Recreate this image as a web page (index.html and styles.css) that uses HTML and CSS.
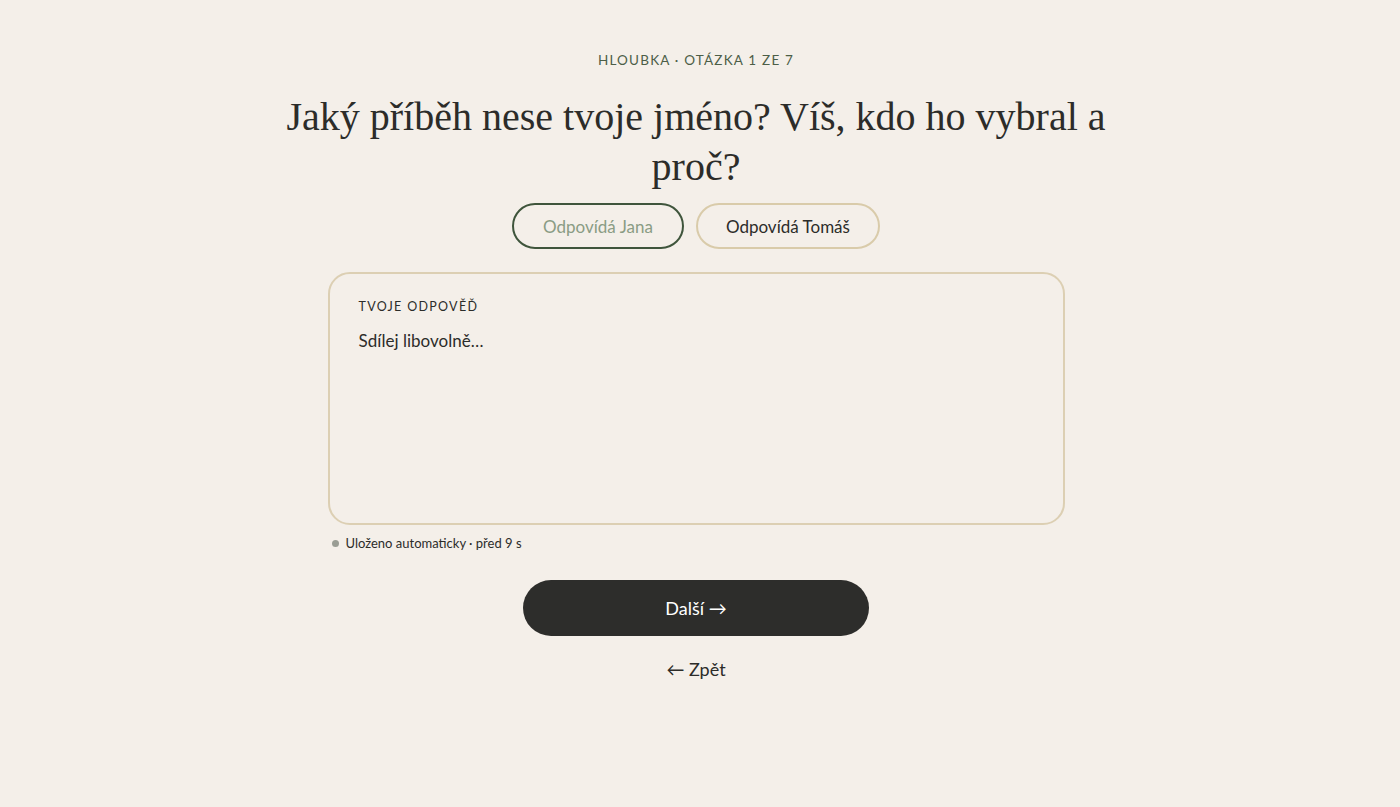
FILE: index.html
```html
<!DOCTYPE html>
<html lang="cs">
<head>
<meta charset="utf-8">
<title>Hloubka</title>
<link rel="stylesheet" href="styles.css">
</head>
<body>
<main class="page">
  <div class="kicker">Hloubka · Otázka 1 ze 7</div>
  <h1 class="question">Jaký příběh nese tvoje jméno? Víš, kdo ho vybral a proč?</h1>
  <div class="who">
    <button class="pill pill-active">Odpovídá Jana</button>
    <button class="pill">Odpovídá Tomáš</button>
  </div>
  <div class="card">
    <div class="card-label">Tvoje odpověď</div>
    <div class="card-placeholder">Sdílej libovolně…</div>
  </div>
  <div class="saved"><span class="dot"></span>Uloženo automaticky · před 9 s</div>
  <button class="next">Další →</button>
  <a class="back">← Zpět</a>
</main>
</body>
</html>
```

FILE: styles.css
```css
html, body {
  margin: 0;
  padding: 0;
  background: #f4efe9;
}
body {
  font-family: "Lato", "Open Sans", sans-serif;
  color: #2c2c29;
}
.page {
  display: flex;
  flex-direction: column;
  align-items: center;
  padding-top: 51px;
  padding-right: 8px;
}
.kicker {
  font-size: 13.5px;
  letter-spacing: 1.2px;
  text-transform: uppercase;
  color: #4c5e47;
  line-height: 18px;
}
.question {
  margin: 23px 0 0;
  max-width: 850px;
  text-align: center;
  font-family: "Liberation Serif", "DejaVu Serif", serif;
  font-weight: 400;
  font-size: 40px;
  line-height: 50px;
  color: #2c2c29;
}
.who {
  display: flex;
  gap: 12px;
  margin-top: 11px;
}
.pill {
  height: 46px;
  border-radius: 23px;
  background: transparent;
  border: 2px solid #d9cbaa;
  font-family: inherit;
  font-size: 17px;
  color: #2c2c29;
  padding: 0 28px;
  cursor: pointer;
}
.pill-active {
  border-color: #3f553c;
  color: #8a9c84;
  padding: 0 29px;
}
.card {
  box-sizing: border-box;
  width: 737px;
  height: 253px;
  margin-top: 23px;
  border: 2px solid #dccfb3;
  border-radius: 22px;
  padding: 24px 29px;
}
.card-label {
  font-size: 12.5px;
  letter-spacing: 1.3px;
  text-transform: uppercase;
  color: #2c2c29;
  line-height: 18px;
}
.card-placeholder {
  margin-top: 13px;
  font-size: 17px;
  line-height: 24px;
  color: #2c2c29;
}
.saved {
  align-self: center;
  width: 737px;
  box-sizing: border-box;
  padding-left: 4px;
  margin-top: 9px;
  display: flex;
  align-items: center;
  gap: 7px;
  font-size: 13px;
  line-height: 18px;
  color: #2c2c29;
}
.dot {
  width: 7px;
  height: 7px;
  border-radius: 50%;
  background: #9a9d94;
}
.next {
  margin-top: 28px;
  width: 346px;
  height: 56px;
  border: none;
  border-radius: 28px;
  background: #2d2d2b;
  color: #ffffff;
  font-family: inherit;
  font-size: 18px;
  cursor: pointer;
}
.back {
  margin-top: 21px;
  font-size: 18px;
  line-height: 24px;
  color: #2c2c29;
  cursor: pointer;
}
```
